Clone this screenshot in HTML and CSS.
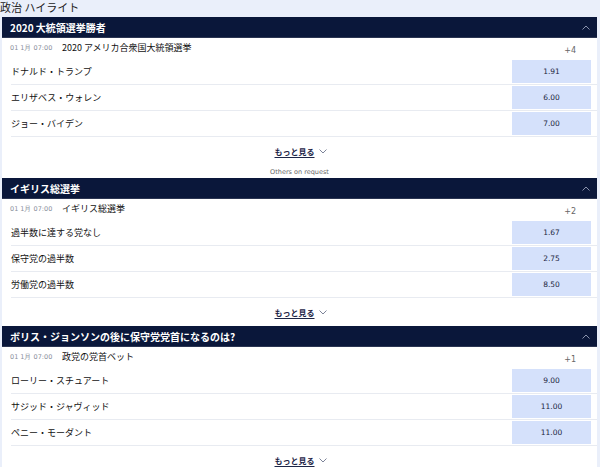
FILE: index.html
```html
<!DOCTYPE html>
<html lang="ja">
<head>
<meta charset="utf-8">
<link rel="stylesheet" href="styles.css">
</head>
<body>
<div class="page">
  <h1 class="title">政治 ハイライト</h1>
  <div class="panel">
    <section class="market">
      <div class="mhead"><span>2020 大統領選挙勝者</span>
        <svg class="chev-up" width="8" height="5" viewBox="0 0 8 5"><polyline points="0.5,4.5 4,1 7.5,4.5" fill="none" stroke="#8a93ad" stroke-width="1"/></svg>
      </div>
      <div class="event"><span class="date">01 1月 07:00</span><span class="ename">2020 アメリカ合衆国大統領選挙</span><span class="plus">+4</span></div>
      <div class="row"><span class="name">ドナルド・トランプ</span><span class="odds">1.91</span></div>
      <div class="row"><span class="name">エリザベス・ウォレン</span><span class="odds">6.00</span></div>
      <div class="row"><span class="name">ジョー・バイデン</span><span class="odds">7.00</span></div>
      <div class="more"><a class="more-link">もっと見る</a>
        <svg class="chev-down" width="8" height="5" viewBox="0 0 8 5"><polyline points="0.5,0.5 4,4 7.5,0.5" fill="none" stroke="#7d8499" stroke-width="1"/></svg>
      </div>
      <div class="others">Others on request</div>
    </section>
    <section class="market">
      <div class="mhead"><span>イギリス総選挙</span>
        <svg class="chev-up" width="8" height="5" viewBox="0 0 8 5"><polyline points="0.5,4.5 4,1 7.5,4.5" fill="none" stroke="#8a93ad" stroke-width="1"/></svg>
      </div>
      <div class="event"><span class="date">01 1月 07:00</span><span class="ename">イギリス総選挙</span><span class="plus">+2</span></div>
      <div class="row"><span class="name">過半数に達する党なし</span><span class="odds">1.67</span></div>
      <div class="row"><span class="name">保守党の過半数</span><span class="odds">2.75</span></div>
      <div class="row"><span class="name">労働党の過半数</span><span class="odds">8.50</span></div>
      <div class="more"><a class="more-link">もっと見る</a>
        <svg class="chev-down" width="8" height="5" viewBox="0 0 8 5"><polyline points="0.5,0.5 4,4 7.5,0.5" fill="none" stroke="#7d8499" stroke-width="1"/></svg>
      </div>
    </section>
    <section class="market">
      <div class="mhead"><span>ボリス・ジョンソンの後に保守党党首になるのは?</span>
        <svg class="chev-up" width="8" height="5" viewBox="0 0 8 5"><polyline points="0.5,4.5 4,1 7.5,4.5" fill="none" stroke="#8a93ad" stroke-width="1"/></svg>
      </div>
      <div class="event"><span class="date">01 1月 07:00</span><span class="ename">政党の党首ベット</span><span class="plus">+1</span></div>
      <div class="row"><span class="name">ローリー・スチュアート</span><span class="odds">9.00</span></div>
      <div class="row"><span class="name">サジッド・ジャヴィッド</span><span class="odds">11.00</span></div>
      <div class="row"><span class="name">ペニー・モーダント</span><span class="odds">11.00</span></div>
      <div class="more"><a class="more-link">もっと見る</a>
        <svg class="chev-down" width="8" height="5" viewBox="0 0 8 5"><polyline points="0.5,0.5 4,4 7.5,0.5" fill="none" stroke="#7d8499" stroke-width="1"/></svg>
      </div>
    </section>
  </div>
</div>
</body>
</html>
```

FILE: styles.css
```css
* { box-sizing: border-box; }
html, body { margin: 0; padding: 0; }
body {
  background: #eaeffa;
  font-family: "Noto Sans CJK JP", "Noto Sans", sans-serif;
  color: #1c1f2a;
  width: 600px;
  height: 467px;
  overflow: hidden;
}
.page { display: flex; flex-direction: column; }
.title {
  margin: 0;
  height: 17px;
  font-size: 11px;
  font-weight: normal;
  line-height: 15px;
  padding-left: 0;
  color: #222;
}
.panel {
  margin: 0 3px 0 2px;
  background: #fff;
  display: flex;
  flex-direction: column;
}
.mhead {
  height: 21px;
  background: #0a173a;
  color: #fff;
  font-size: 10px;
  font-weight: bold;
  display: flex;
  align-items: center;
  justify-content: space-between;
  padding: 0 7px 0 8px;
  border-bottom: 1px solid #2b3552;
}
.chev-up { display: block; margin-top: 1px; }
.event {
  height: 21px;
  display: flex;
  align-items: flex-start;
  padding: 3px 8px 0 8px;
}
.date {
  font-family: "DejaVu Sans", sans-serif;
  font-size: 6.5px;
  color: #8a8f9c;
  line-height: 14px;
  width: 52px;
}
.ename {
  font-size: 9px;
  line-height: 14px;
  color: #111;
  flex: 1;
}
.plus {
  font-family: "DejaVu Sans", sans-serif;
  font-size: 8px;
  color: #666;
  line-height: 14px;
  margin-top: 3px;
  margin-right: 13px;
}
.row {
  height: 26px;
  margin-left: 9px;
  border-bottom: 1px solid #e8ebf1;
  display: flex;
  align-items: center;
  justify-content: space-between;
  padding-right: 6px;
}
.name {
  font-size: 9px;
  color: #111;
  padding-left: 0;
}
.odds {
  width: 79px;
  height: 23px;
  background: #d5e1fb;
  font-family: "DejaVu Sans", sans-serif;
  font-size: 7.5px;
  color: #1b2540;
  display: flex;
  align-items: center;
  justify-content: center;
}
.more {
  height: 28px;
  display: flex;
  align-items: center;
  justify-content: center;
  gap: 4px;
  padding-left: 2px;
}
.more-link {
  font-size: 8px;
  color: #1d2547;
  font-weight: bold;
  text-decoration: underline;
  text-underline-offset: 2px;
}
.chev-down { display: block; margin-top: 1px; }
.others {
  height: 13px;
  font-family: "DejaVu Sans", sans-serif;
  font-size: 6.5px;
  color: #666;
  text-align: center;
  line-height: 12px;
  padding-top: 1px;
}
```
